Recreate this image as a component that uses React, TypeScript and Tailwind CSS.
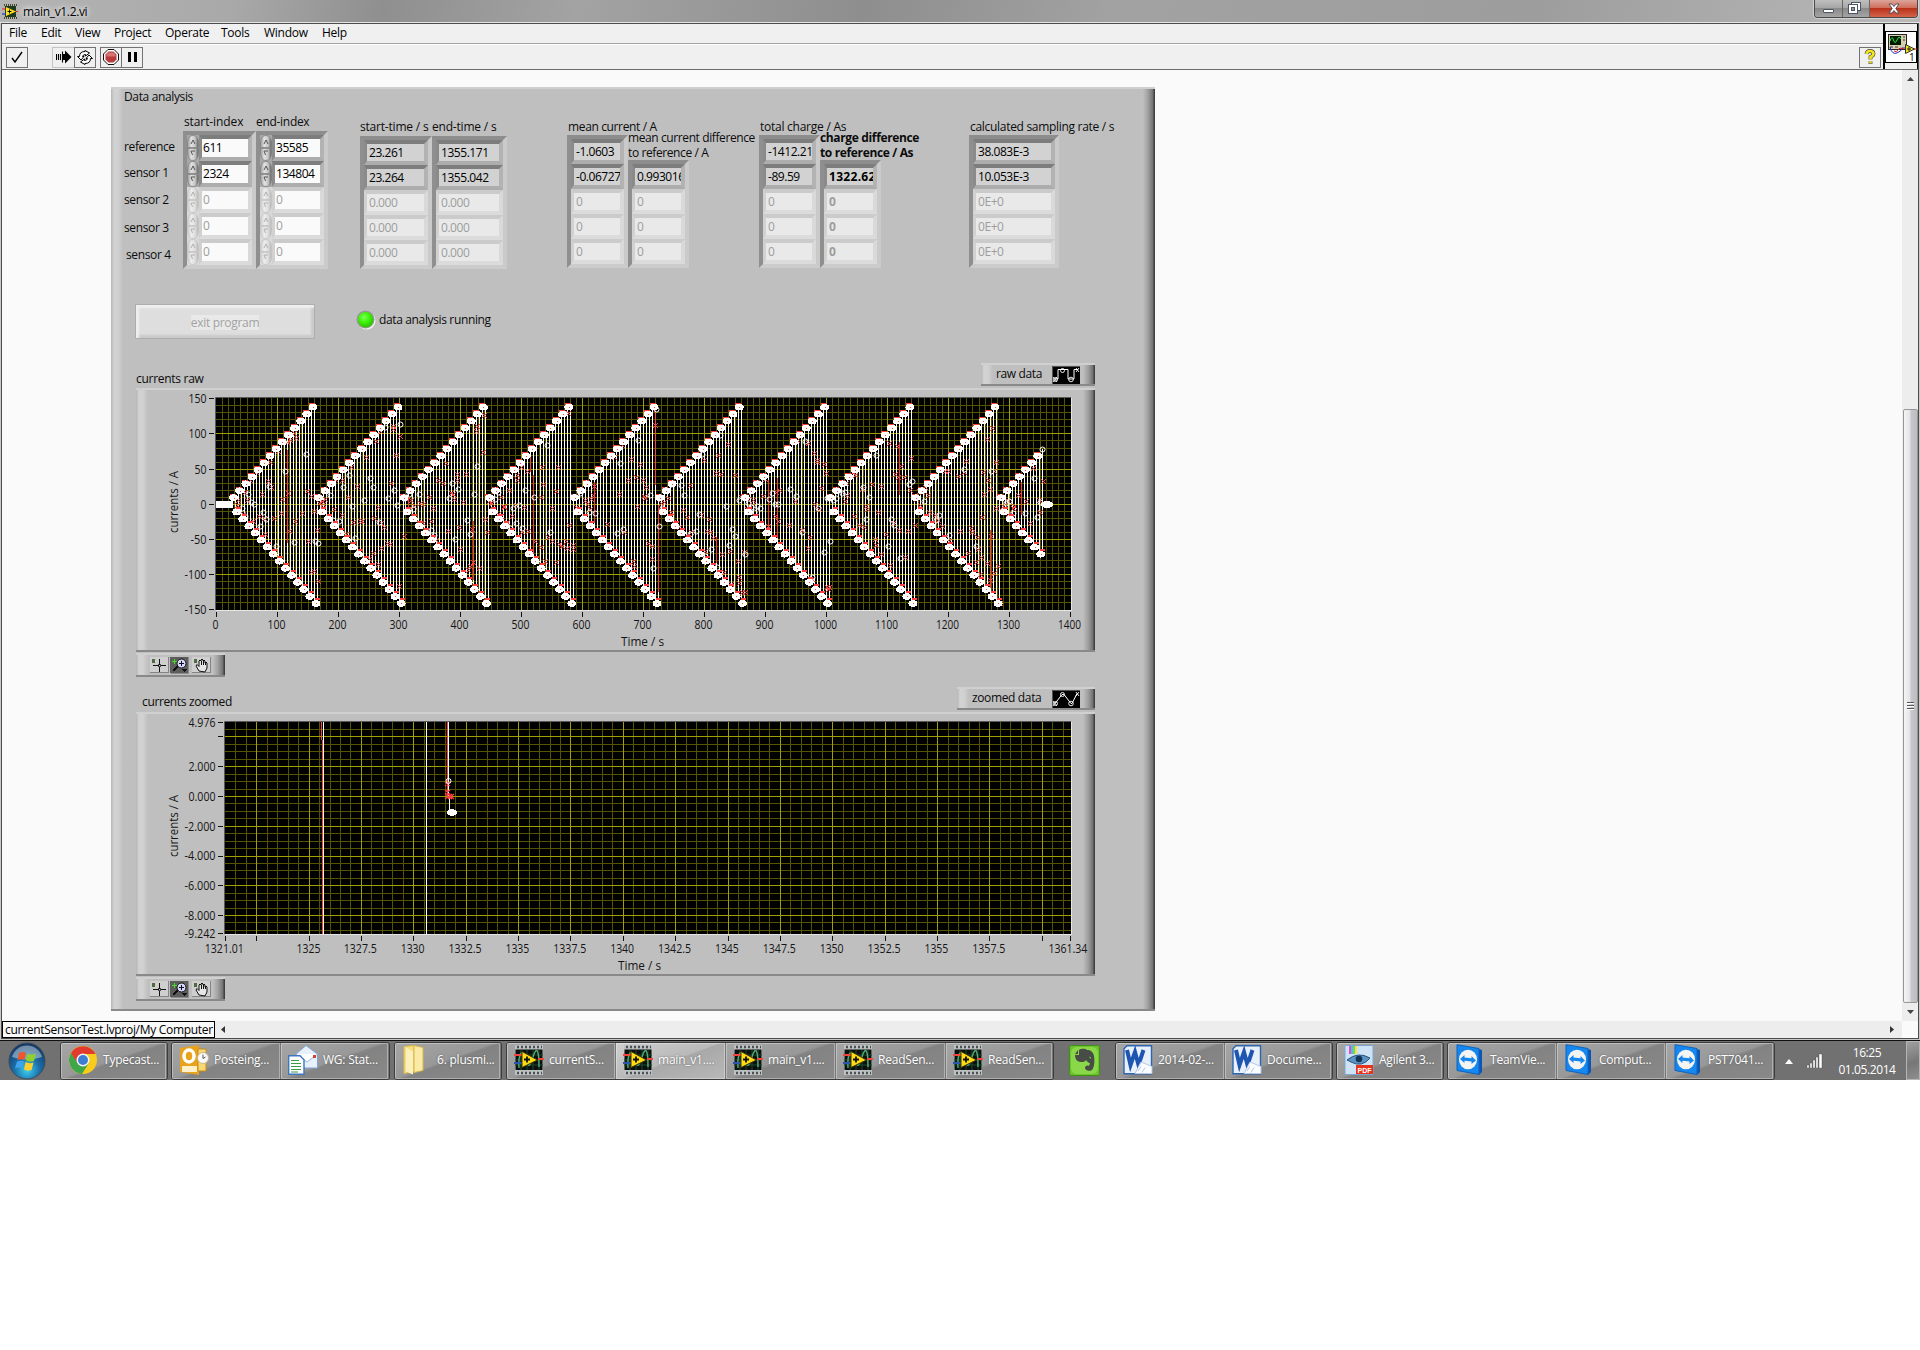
import React from "react";

/* ------------------------------------------------------------------ */
/* Data                                                                */
/* ------------------------------------------------------------------ */

type Row = { value: string; on: boolean };
const rows = (a: string[], zero: string, skip = 0): Row[] => [
  ...a.map((value) => ({ value, on: true })),
  ...Array.from({ length: 5 - skip - a.length }, () => ({ value: zero, on: false })),
];

/* Deterministic noise so that the scatter is stable between renders */
function makeRandom(seed: number) {
  let s = seed;
  return () => {
    s = (s * 1664525 + 1013904223) % 4294967296;
    return s / 4294967296;
  };
}

const RX = (t: number) => 80.5 + t * 0.61;
const RY = (a: number) => 116.3 - a * 0.7035;

type Pt = { x: number; y: number };
const raw = (() => {
  const random = makeRandom(2014);
  const pos: Pt[] = [];
  const neg: Pt[] = [];
  const lines: { x: number; y1: number; y2: number }[] = [];
  const crosses: Pt[] = [];
  const rings: Pt[] = [];
  for (let c = 0; c < 10; c++) {
    const t0 = 28 + c * 139.8;
    const last = c === 9 ? 7 : 14;
    for (let n = 1; n <= last; n++) {
      const p = { x: RX(t0 + (n - 1) * 10), y: RY(9.9 * n - 0.5) };
      const q = { x: RX(t0 + 5 + (n - 1) * 10), y: RY(-10 * n - 1) };
      pos.push(p);
      neg.push(q);
      const nextTop = n === last ? (c === 9 ? RY(78) : RY(9.4)) : RY(9.9 * (n + 1) - 0.5);
      [
        { x: Math.round(p.x + 1.3), y1: p.y, y2: q.y },
        { x: Math.round(q.x + 1.3), y1: nextTop, y2: q.y },
      ].forEach((l) => {
        lines.push(l);
        const span = l.y2 - l.y1;
        const count = Math.min(3, Math.floor(random() * 2.3 + span / 190));
        for (let i = 0; i < count; i++) crosses.push({ x: l.x + Math.round(random() * 2 - 1), y: Math.round(l.y1 + random() * span) });
        if (random() < 0.55) rings.push({ x: l.x + 1, y: Math.round(l.y1 + random() * span) });
      });
    }
  }
  return { pos, neg, lines, crosses, rings };
})();

/* Stretches where the sensor trace is drawn above the reference trace: x, top, bottom */
const redSegments = [
  [152, 62, 155], [336, 133, 192], [396, 87, 166], [274, 108, 124], [393, 69, 84], [457, 94, 135],
  [518, 22, 97], [522, 117, 204], [579, 149, 175], [631, 92, 142], [640, 90, 150], [763, 54, 107],
  [884, 94, 127], [854, 142, 200],
].map(([x, a, b]) => {
  const near = raw.lines.reduce((m, l) => (Math.abs(l.x - x) < Math.abs(m.x - x) ? l : m));
  return { x: near.x, a, b };
});

const AXIS = "fill-[#151515] font-['Open_Sans',sans-serif] text-[12px]";

/* ------------------------------------------------------------------ */
/* Front panel building blocks                                         */
/* ------------------------------------------------------------------ */

const bevel =
  "border-t-2 border-b-2 border-t-[#d0d0d0] border-b-[#898989] bg-[linear-gradient(90deg,#b6b6b6,#d2d2d2_3px,#d1d1d1_7px,#bfbfbf_12px,#bfbfbf_calc(100%-12px),#a0a0a0_calc(100%-7px),#707070_calc(100%-2px),#404040_calc(100%-1px),#404040)]";

function Spinner({ on }: { on: boolean }) {
  const id = on ? "knobOn" : "knobOff";
  const edge = on ? "#7c7c7c" : "#c2c2c2";
  return (
    <svg className="h-[26px] w-[12px] shrink-0" viewBox="0 0 12 26">
      <defs>
        <linearGradient id={id} x1="0" x2="1">
          <stop offset="0" stopColor={on ? "#9b9b9b" : "#cccccc"} />
          <stop offset="0.35" stopColor={on ? "#e2e2e2" : "#ededed"} />
          <stop offset="0.7" stopColor={on ? "#c4c4c4" : "#dddddd"} />
          <stop offset="1" stopColor={on ? "#5a5a5a" : "#b4b4b4"} />
        </linearGradient>
      </defs>
      <rect width="12" height="26" fill={on ? "#a8a8a8" : "#d9d9d9"} />
      <path d="M.5 12.500V8Q1 .5 6 .5T11.500 8v4.500z" fill={`url(#${id})`} stroke={edge} strokeWidth=".7" />
      <path d="M.5 13.500V18Q1 25.500 6 25.500T11.500 18v-4.500z" fill={`url(#${id})`} stroke={edge} strokeWidth=".7" />
      <path d="M4 9l2-4 2 4M8 16H4l1.500 4" fill="none" stroke={on ? "#555" : "#b0b0b0"} />
    </svg>
  );
}

function ArrayBox({ data, spin, bold, tall }: { data: Row[]; spin?: boolean; bold?: boolean; tall?: boolean }) {
  return (
    <div className="border-4 border-t-[#8d8d8d] border-r-[#cacaca] border-b-[#cccccc] border-l-[#8f8f8f]">
      {data.map((r, i) => (
        <div key={i} className={tall ? "flex h-[26px]" : "flex h-[25px]"}>
          {spin && <Spinner on={r.on} />}
          <div
            className={
              "flex min-w-0 flex-1 items-center overflow-hidden border-4 border-l-[3px] text-[12px] leading-[16px] whitespace-nowrap " +
              (r.on
                ? "border-t-[#7d7d7d] border-r-[#b3b3b3] border-b-[#adadad] border-l-[#8b8b8b] text-black "
                : "border-t-[#cbcbcb] border-r-[#d9d9d9] border-b-[#dbdbdb] border-l-[#d1d1d1] text-[#9d9d9d] ") +
              (spin ? "bg-[#fafafa] pl-px " : r.on ? "bg-[#d2d2d2] pl-[2px] " : "bg-[#e9e9e9] pl-[2px] ") +
              (bold ? "font-bold tracking-[0.3px]" : "tracking-[-0.45px]")
            }
          >
            {r.value}
          </div>
        </div>
      ))}
    </div>
  );
}

function Label({ children, className = "" }: { children: React.ReactNode; className?: string }) {
  return <div className={"text-[12px] leading-[15px] whitespace-nowrap text-[#0c0c0c] " + (className.includes("tracking") ? "" : "tracking-[-0.36px] ") + className}>{children}</div>;
}

function Palette() {
  return (
    <div className={"ml-[25px] flex h-[24px] w-[89px] pt-[2px] pl-[14px] " + bevel}>
      <svg className="h-[17px] w-[62px]" viewBox="0 0 62 17" shapeRendering="crispEdges">
        <rect x="0" y="0" width="19" height="16" fill="#cfcfcf" />
        <path d="M0 15.500H18.500V0" fill="none" stroke="#858585" />
        <path d="M3 8.500h13M9.500 2v13" stroke="#111" />
        <rect x="8.500" y="7.500" width="2" height="2" fill="#ccc" stroke="#111" strokeWidth=".7" />
        <rect x="2" y="2" width="3" height="4" fill="#4d6b3f" />
        <rect x="20" y="0" width="18" height="16" fill="#5d5d5d" />
        <path d="M38 0v16H21" fill="none" stroke="#8b8b8b" />
        <path d="M23 14l6-6" stroke="#111" strokeWidth="2" />
        <circle cx="31.500" cy="6.500" r="4.500" fill="#d6d6ff" stroke="#111" shapeRendering="auto" />
        <path d="M29 6.500h5M31.500 4v5" stroke="#111" />
        <path d="M31 12h6l-3 3z" fill="#111" />
        <path d="M22 4.500h5M24.500 2v5" stroke="#3fe01e" />
        <rect x="42" y="0" width="19" height="16" fill="#cfcfcf" />
        <path d="M42 15.500H60.500V0" fill="none" stroke="#858585" />
        <path
          d="M49 14l-3-5 1-1.500 2 2V4l1-1 1 1V3l1-1 1 1v1l1-1 1 1v2l1-1 1 1v5l-2 4z"
          fill="#e5e5e5"
          stroke="#111"
          shapeRendering="auto"
        />
        <path d="M51.500 4v4M53.500 4v4M55.500 5v3" stroke="#111" />
        <rect x="44" y="2" width="3" height="4" fill="#4d6b3f" />
      </svg>
    </div>
  );
}

function Legend({ text, zoomed }: { text: string; zoomed?: boolean }) {
  return (
    <div className={(zoomed ? "w-[138px] " : "w-[114px] ") + "mr-[60px] ml-auto flex h-[23px] items-center pl-[15px] " + bevel}>
      <Label className="mb-[2px] flex-1">{text}</Label>
      <svg className="mr-[15px] h-[18px] w-[28px]" viewBox="0 0 28 18">
        <rect width="28" height="18" fill="#000" />
        <path d="M.5 18V.5H28" fill="none" stroke="#555" />
        <path
          d={zoomed ? "M3 13.500l7-9h2l7 9h1l5-10" : "M3 13h3V3.500h10V13h6V3.500h4"}
          fill="none"
          stroke="#fff"
          strokeWidth="1"
        />
        <g fill="none" stroke="#fff" strokeWidth=".9">
          <path d="M1 11l4 5M5 11l-4 5M24 2l3 4M27 2l-3 4" />
          <circle cx="3.500" cy="13.500" r="2" />
          <circle cx="10.500" cy="4.500" r="2" />
          <circle cx="19" cy="13.500" r="2.300" />
        </g>
      </svg>
    </div>
  );
}

const range = (a: number, b: number) => Array.from({ length: b - a + 1 }, (_, i) => a + i);

function RawChart() {
  return (
    <svg className="block h-[260px] w-[959px]" viewBox="0 2 959 260">
      <path d="M79.500 222V9.500H935" fill="none" stroke="#5a5a5a" />
      <path d="M80 222.500H935.500V10" fill="none" stroke="#e6e6e6" />
      <rect x="80" y="10" width="855" height="212" fill="#000" />
      <g shapeRendering="crispEdges">
        {range(0, 140).map((i) => i % 10 !== 0 && <rect key={i} x={Math.round(RX(i * 10) - 0.5)} y="10" width="1" height="212" fill="#555500" />)}
        {range(-15, 15).map((i) => i % 5 !== 0 && <rect key={i} x="80" y={Math.round(RY(i * 10) - 0.5)} width="855" height="1" fill="#555500" />)}
        {range(1, 13).map((i) => <rect key={i} x={Math.round(RX(i * 100) - 0.5)} y="10" width="1" height="212" fill="#a0a000" />)}
        {range(-2, 2).map((i) => <rect key={i} x="80" y={Math.round(RY(i * 50) - 0.5)} width="855" height="1" fill="#a0a000" />)}
        {raw.lines.map((l, i) => <rect key={i} x={l.x} y={l.y1} width="1" height={l.y2 - l.y1} fill="#fff" />)}
        {redSegments.map((s, i) => <rect key={i} x={s.x} y={s.a} width="1" height={s.b - s.a} fill="#ff4040" />)}
        {raw.crosses.map((p, i) => (
          <path
            key={i}
            d={`M${p.x - 2} ${p.y - 2}h1v1h-1zM${p.x + 2} ${p.y - 2}h1v1h-1zM${p.x - 1} ${p.y - 1}h1v1h-1zM${p.x + 1} ${p.y - 1}h1v1h-1zM${p.x} ${p.y}h1v1h-1zM${p.x - 1} ${p.y + 1}h1v1h-1zM${p.x + 1} ${p.y + 1}h1v1h-1zM${p.x - 2} ${p.y + 2}h1v1h-1zM${p.x + 2} ${p.y + 2}h1v1h-1z`}
            fill="#ff4848"
          />
        ))}
      </g>
      {raw.rings.map((p, i) => (
        <circle key={i} cx={p.x + 0.5} cy={p.y + 0.5} r="2.500" fill="none" stroke="#fff" />
      ))}
      <g shapeRendering="crispEdges">
        {raw.pos.map((p, i) => (
          <g key={i}>
            <rect x={p.x - 4} y={p.y - 4} width="6" height="2" fill="#ff4040" />
            <ellipse cx={p.x} cy={p.y} rx="4.400" ry="3.300" fill="#fff" />
            <rect x={Math.round(p.x)} y={Math.round(p.y)} width="1" height="1" fill="#ff4040" />
          </g>
        ))}
        {raw.neg.map((p, i) => (
          <g key={i}>
            <rect x={p.x - 1} y={p.y - 5} width="5" height="2" fill="#ff4040" />
            <ellipse cx={p.x} cy={p.y} rx="4.400" ry="3.300" fill="#fff" />
            <rect x={Math.round(p.x)} y={Math.round(p.y)} width="1" height="1" fill="#ff4040" />
          </g>
        ))}
        <rect x="80" y="113" width="17" height="7" fill="#fff" />
        <ellipse cx="911" cy="116.500" rx="6" ry="3.500" fill="#fff" />
        {range(0, 14).map((i) => <rect key={i} x={Math.round(RX(i * 100) - 0.5)} y="224" width="1" height="5" fill="#111" />)}
        {range(-3, 3).map((i) => <rect key={i} x="73" y={Math.round(RY(i * 50) - 0.5)} width="5" height="1" fill="#111" />)}
      </g>
      <circle cx="906.500" cy="61.500" r="2.500" fill="none" stroke="#fff" />
      {range(0, 14).map((i) => {
        const w = i === 0 ? 6 : i < 10 ? 18 : 23;
        return (
          <text key={i} x={RX(i * 100) - 1} y="241" textAnchor="middle" textLength={w} lengthAdjust="spacingAndGlyphs" className={AXIS}>
            {i * 100}
          </text>
        );
      })}
      {range(-3, 3).map((i) => (
        <text key={i} x="70.500" y={RY(i * 50) + 4.500} textAnchor="end" textLength={[22, 22, 16, 6, 12, 18, 18][i + 3]} lengthAdjust="spacingAndGlyphs" className={AXIS}>
          {i * 50}
        </text>
      ))}
      <text x="485" y="258" textLength="43" lengthAdjust="spacingAndGlyphs" className={AXIS}>Time / s</text>
      <text transform="translate(42 145) rotate(-90)" textLength="62" lengthAdjust="spacingAndGlyphs" className={AXIS}>currents / A</text>
    </svg>
  );
}

const ZX = (t: number) => 89.5 + (t - 1321.01) * 20.95;
const ZY = (a: number) => 84.5 - a * 14.88;

function ZoomChart() {
  return (
    <svg className="block h-[260px] w-[959px]" viewBox="0 2 959 260">
      <path d="M88.500 222V9.500H935" fill="none" stroke="#5a5a5a" />
      <path d="M89 222.500H935.500V10" fill="none" stroke="#e6e6e6" />
      <rect x="89" y="10" width="846" height="212" fill="#000" />
      <g shapeRendering="crispEdges">
        {range(2643, 2722).map((i) => i % 5 !== 0 && <rect key={i} x={Math.round(ZX(i / 2) - 0.5)} y="10" width="1" height="212" fill="#555500" />)}
        {range(-18, 9).map((i) => i % 4 !== 0 && <rect key={i} x="89" y={Math.round(ZY(i / 2) - 0.5)} width="846" height="1" fill="#555500" />)}
        {range(529, 544).map((i) => (
          <g key={i}>
            <rect x={Math.round(ZX(i * 2.5) - 0.5)} y="10" width="1" height="212" fill="#a0a000" />
            <rect x={Math.round(ZX(i * 2.5) - 0.5)} y="224" width="1" height="5" fill="#111" />
          </g>
        ))}
        {range(-4, 2).map((i) => (
          <g key={i}>
            <rect x="89" y={Math.round(ZY(i * 2) - 0.5)} width="846" height="1" fill="#a0a000" />
            <rect x="82" y={Math.round(ZY(i * 2) - 0.5)} width="5" height="1" fill="#111" />
          </g>
        ))}
        <rect x="82" y="10" width="5" height="1" fill="#111" />
        <rect x="82" y="221" width="5" height="1" fill="#111" />
        <rect x="89" y="224" width="1" height="5" fill="#111" />
        <rect x="934" y="224" width="1" height="5" fill="#111" />
        <rect x="185" y="10" width="1" height="18" fill="#ff4040" />
        <rect x="186" y="28" width="1" height="194" fill="#ff4040" />
        <rect x="187" y="10" width="1" height="212" fill="#fff" />
        <rect x="290" y="10" width="1" height="212" fill="#fff" />
        <rect x="311" y="10" width="1" height="74" fill="#ff4040" />
        <rect x="312" y="10" width="1" height="74" fill="#fff" />
        <rect x="313" y="84" width="1" height="14" fill="#fff" />
        <ellipse cx="316" cy="100.500" rx="5" ry="3.200" fill="#fff" />
      </g>
      <path d="M309 70l5 4m0-4l-5 4M309 78l5 4m0-4l-5 4M309 82l7 5m0-5l-7 5M312 82l6 5m0-5l-6 5" stroke="#ff4040" strokeWidth="1.300" />
      <circle cx="312.500" cy="69" r="2.500" fill="none" stroke="#fff" />
      {[
        ["4.976", 4.976], ["2.000", 2], ["0.000", 0], ["-2.000", -2], ["-4.000", -4], ["-6.000", -6], ["-8.000", -8], ["-9.242", -9.22],
      ].map(([s, v]) => (
        <text key={s} x="79.500" y={ZY(v as number) + 4.400} textAnchor="end" textLength={(v as number) < 0 ? 31 : 27} lengthAdjust="spacingAndGlyphs" className={AXIS}>
          {s}
        </text>
      ))}
      {[1321.01, 1325, 1327.5, 1330, 1332.5, 1335, 1337.5, 1340, 1342.5, 1345, 1347.5, 1350, 1352.5, 1355, 1357.5, 1361.34].map((v) => (
        <text
          key={v}
          x={ZX(v) - (v === 1325 ? 0.5 : v === 1361.34 ? 2.5 : 1.2)}
          y="241"
          textAnchor="middle"
          textLength={String(v).length === 4 ? 24 : String(v).length === 6 ? 33 : 39}
          lengthAdjust="spacingAndGlyphs"
          className={AXIS}
        >
          {v}
        </text>
      ))}
      <text x="482" y="258" textLength="43" lengthAdjust="spacingAndGlyphs" className={AXIS}>Time / s</text>
      <text transform="translate(42 145) rotate(-90)" textLength="62" lengthAdjust="spacingAndGlyphs" className={AXIS}>currents / A</text>
    </svg>
  );
}

function FrontPanel() {
  const sensors = ["reference", "sensor 1", "sensor 2", "sensor 3", "sensor 4"];
  const gaps = ["mt-[35px]", "mt-[11px]", "mt-[12px]", "mt-[13px]", "mt-[12px] pl-[2px]"];
  return (
    <div className={"flex h-[924px] w-[1044px] flex-col " + bevel}>
      <div className="flex h-[215px] pl-[13px]">
        <div className="w-[59px]">
          <Label>Data analysis</Label>
          {sensors.map((s, i) => (
            <Label key={s} className={gaps[i]}>{s}</Label>
          ))}
        </div>
        <div className="w-[73px] pt-[25px]">
          <Label className="pb-[2px] pl-px tracking-[-0.1px]">start-index</Label>
          <ArrayBox spin tall data={rows(["611", "2324"], "0")} />
        </div>
        <div className="mr-[32px] w-[72px] pt-[25px]">
          <Label className="pb-[2px] tracking-[-0.3px]">end-index</Label>
          <ArrayBox spin tall data={rows(["35585", "134804"], "0")} />
        </div>
        <div className="w-[72px] pt-[30px]">
          <Label className="pb-[2px] tracking-[-0.2px]">start-time / s</Label>
          <ArrayBox data={rows(["23.261", "23.264"], "0.000")} />
        </div>
        <div className="mr-[60px] w-[75px] pt-[30px]">
          <Label className="pb-[2px] tracking-[-0.2px]">end-time / s</Label>
          <ArrayBox data={rows(["1355.171", "1355.042"], "0.000")} />
        </div>
        <div className="w-[61px] pt-[30px]">
          <Label className="pb-px pl-px">mean current / A</Label>
          <ArrayBox data={rows(["-1.0603", "-0.06727"], "0")} />
        </div>
        <div className="mr-[70px] w-[61px] pt-[41px]">
          <Label className="tracking-[-0.4px]">mean current difference<br />to reference / A</Label>
          <ArrayBox data={rows(["0.993016"], "0", 1)} />
        </div>
        <div className="w-[61px] pt-[30px]">
          <Label className="pb-px pl-px tracking-[-0.25px]">total charge / As</Label>
          <ArrayBox data={rows(["-1412.21", "-89.59"], "0")} />
        </div>
        <div className="mr-[88px] w-[61px] pt-[41px]">
          <Label className="font-bold tracking-[-0.35px]">charge difference<br />to reference / As</Label>
          <ArrayBox bold data={rows(["1322.62"], "0", 1)} />
        </div>
        <div className="w-[90px] pt-[30px]">
          <Label className="pb-px pl-px tracking-[-0.3px]">calculated sampling rate / s</Label>
          <ArrayBox data={rows(["38.083E-3", "10.053E-3"], "0E+0")} />
        </div>
      </div>

      <div className="flex h-[36px] pl-[24px]">
        <div className="flex h-[35px] w-[180px] items-center justify-center border border-[#adadad] bg-[#dedede] shadow-[inset_3px_3px_2px_#efefef,inset_-3px_-3px_2px_#cacaca]">
          <Label className="mt-[2px] bg-[#e9e9e9] tracking-[-0.3px] text-[#a2a2a2]">exit program</Label>
        </div>
        <svg className="mt-[6px] ml-[41px] h-[20px] w-[20px]" viewBox="0 0 20 20">
          <defs>
            <radialGradient id="led" cx=".4" cy=".35" r=".6">
              <stop offset="0" stopColor="#7dff5a" />
              <stop offset=".5" stopColor="#42f70c" />
              <stop offset="1" stopColor="#2fc904" />
            </radialGradient>
          </defs>
          <circle cx="10.700" cy="10.700" r="8.800" fill="#f2f2f2" />
          <circle cx="9.500" cy="9.500" r="9" fill="#979797" />
          <circle cx="9.700" cy="9.700" r="7.700" fill="url(#led)" />
        </svg>
        <Label className="mt-[8px] ml-[3px]">data analysis running</Label>
      </div>

      <div className="flex h-[48px] items-end">
        <Label className="mb-[2px] ml-[25px] tracking-[-0.28px]">currents raw</Label>
        <div className="mb-[2px] flex flex-1">
          <Legend text="raw data" />
        </div>
      </div>
      <div className={"ml-[25px] h-[264px] w-[959px] " + bevel}>
        <RawChart />
      </div>
      <div className="mt-px">
        <Palette />
      </div>

      <div className="flex h-[35px] items-end">
        <Label className="mb-[3px] ml-[31px]">currents zoomed</Label>
        <div className="mb-[2px] flex flex-1">
          <Legend text="zoomed data" zoomed />
        </div>
      </div>
      <div className={"ml-[25px] h-[264px] w-[959px] " + bevel}>
        <ZoomChart />
      </div>
      <div className="mt-px">
        <Palette />
      </div>
    </div>
  );
}

/* ------------------------------------------------------------------ */
/* Icons                                                               */
/* ------------------------------------------------------------------ */

function LabViewIcon() {
  return (
    <svg className="h-[30px] w-[30px]" viewBox="0 0 30 30">
      <rect x="1" y="0" width="28" height="30" fill="#bcc2c3" />
      <path d="M3 2h25M3 28h25" stroke="#4c5050" strokeWidth="2.400" strokeDasharray="2 2" />
      <rect x="1.500" y="4.500" width="27" height="20.500" fill="#0b0f0d" />
      <path d="M7 5v20M13 5v20M19 5v20M25 5v20M1 10h28M1 15h28M1 20h28" stroke="#1d4a33" />
      <path d="M5 23C4 9 8 3 11 12s4 13 8 0 6-5 6 10" fill="none" stroke="#4fae78" strokeWidth="1.400" />
      <path d="M0 10h8M24 14h6" stroke="#f0453a" strokeWidth="1.800" />
      <path d="M0 18h8" stroke="#2d55b0" strokeWidth="1.800" />
      <path d="M8 6.500l15.500 8.500L8 22.500z" fill="#ffdc12" stroke="#3c3505" />
      <path d="M10 14.500h6M13 11.500v6" stroke="#111" strokeWidth="1.800" />
    </svg>
  );
}

function ChromeIcon() {
  return (
    <svg className="h-[30px] w-[30px]" viewBox="0 0 30 30">
      <circle cx="15" cy="15" r="14" fill="#f8cc1c" />
      <path d="M2.900 8A14 14 0 0 1 27.500 9H15l-6.500 9z" fill="#e23b2e" />
      <path d="M2.900 8A14 14 0 0 0 14 29l6.500-10.500-11-.5z" fill="#3fa649" />
      <circle cx="15" cy="15" r="6.500" fill="#f5f5f5" />
      <circle cx="15" cy="15" r="5" fill="#3d7ed2" />
    </svg>
  );
}

function OutlookIcon() {
  return (
    <svg className="h-[30px] w-[30px]" viewBox="0 0 30 30">
      <path d="M1 3l19-3v30L1 27z" fill="#e9a21b" />
      <path d="M19 4h8v22h-8z" fill="#f7d776" stroke="#c98b12" />
      <rect x="3" y="21" width="15" height="6" fill="#fff2cb" />
      <ellipse cx="10" cy="11" rx="5" ry="6" fill="none" stroke="#fff" strokeWidth="3.500" />
      <circle cx="24" cy="13" r="5.500" fill="#fafafa" stroke="#c4b78f" />
      <path d="M24 9.500V13.500l2.500-1.500" fill="none" stroke="#555" />
    </svg>
  );
}

function MailIcon() {
  return (
    <svg className="h-[30px] w-[30px]" viewBox="0 0 30 30">
      <path d="M8 9L18 .5 29.500 9v14H8z" fill="#e8f0fb" stroke="#7ea3d4" />
      <path d="M8 9l11 8 10.500-8" fill="#fff" stroke="#9bb8df" />
      <rect x="25" y="10" width="3" height="3" fill="#d9412e" />
      <path d="M.7 10.700H12l4 4v14.500H.7z" fill="#fff" stroke="#3e76c1" strokeWidth="1.400" />
      <path d="M3 15.500h8M3 18.500h10M3 21.500h10M3 24.500h10M3 27h7" stroke="#3a9c42" strokeWidth="1.200" />
    </svg>
  );
}

function FolderIcon() {
  return (
    <svg className="h-[30px] w-[30px]" viewBox="0 0 30 30">
      <path d="M2 1.500l10-1v26l-10 2z" fill="#f6df83" stroke="#d9b84b" />
      <path d="M12 .5l9 2v23l-9 2z" fill="#f9eaa5" stroke="#d9b84b" />
      <path d="M4 2.500l7 4v23l-7-3z" fill="#fbf0bb" />
    </svg>
  );
}

function WordIcon() {
  return (
    <svg className="h-[30px] w-[30px]" viewBox="0 0 30 30">
      <path d="M4 .7h24.500v28H1V3.700z" fill="#e8f0fa" stroke="#2e65b0" strokeWidth="1.400" />
      <path d="M4 5l3.500 15L12 7l3.500 13L20.500 5" fill="none" stroke="#1d55b0" strokeWidth="4" />
      <path d="M18 17l11 4.500v7H12z" fill="#fafcff" stroke="#b5c8e4" />
      <path d="M15 26l3-4.500M19 27.500l3-5" stroke="#b5c8e4" />
    </svg>
  );
}

function PdfIcon() {
  return (
    <svg className="h-[30px] w-[30px]" viewBox="0 0 30 30">
      <rect x="1" y=".5" width="28" height="29" rx="1" fill="#cfe3f6" stroke="#7ea6cf" />
      <path d="M5 1h2v8H5z" fill="#e34bd0" />
      <path d="M7 1h2v8H7z" fill="#4dbcf0" />
      <path d="M9 1h2v8H9z" fill="#6fdc4a" />
      <path d="M11 1h2v8h-2z" fill="#f5e14a" />
      <path d="M3 15q11-9 23-2-8 10-19 4z" fill="#5c93c6" stroke="#28537f" />
      <circle cx="15" cy="14" r="3.300" fill="#123353" />
      <rect x="12" y="20" width="17" height="9" fill="#e8321b" />
      <text x="13.500" y="27.500" textLength="14" lengthAdjust="spacingAndGlyphs" className="fill-white font-['Liberation_Sans',sans-serif] text-[8px] font-bold">PDF</text>
    </svg>
  );
}

function TeamViewerIcon() {
  return (
    <svg className="h-[31px] w-[30px]" viewBox="0 0 30 31">
      <path d="M24 5l3 1v22l-3 3z" fill="#0b56b4" />
      <path d="M2 .7l22 3.800v26L2 26.500z" fill="#1687ee" stroke="#0e63bd" />
      <ellipse cx="13" cy="15.500" rx="9" ry="9.800" fill="#f4f4f2" />
      <path d="M5 15l4.500-4v2.500l7 .8V12l4.500 4.500-4.500 3.500v-2.500l-7-.8V19z" fill="#1687ee" />
    </svg>
  );
}

function EvernoteIcon() {
  return (
    <svg className="h-[31px] w-[31px]" viewBox="0 0 31 31">
      <rect x=".5" y=".5" width="30" height="30" rx="2" fill="#6cc32c" stroke="#3f9312" />
      <rect x="2" y="2" width="27" height="27" rx="6" fill="#8bd74a" />
      <path
        d="M6 10h4V5c3-2 7-1 8 0 3 0 6 1 7 6 1 6 0 12-2 14-3 2-7 0-7-2s2-3 4-2l1-3c-2 0-3-2-4-3-1 2-3 2-5 2-4 0-6-3-6-7zM6 9l3-4v4z"
        fill="#474d46"
      />
      <path d="M20 12q2-1 2 2z" fill="#8bd74a" />
    </svg>
  );
}

/* ------------------------------------------------------------------ */
/* Taskbar                                                             */
/* ------------------------------------------------------------------ */

type Task = { icon: React.ReactNode; text: string; width: string; active?: boolean };

function TaskGroup({ items, className = "" }: { items: Task[]; className?: string }) {
  return (
    <div className={"flex h-[38px] overflow-hidden rounded-[3px] border border-[#3c3c3c] " + className}>
      {items.map((t, i) => (
        <div
          key={i}
          className={
            "flex shrink-0 items-center gap-[5px] border-r border-r-[#777] pb-[2px] pl-[7px] shadow-[inset_0_0_0_1px_#ffffff55] " +
            t.width +
            " " +
            (t.active
              ? "bg-[linear-gradient(160deg,#d0d0d0,#b9b9b9_50%,#a9a9a9_51%,#b8b8b8)]"
              : "bg-[linear-gradient(160deg,#a6a6a6,#989898_48%,#838383_52%,#898989)]")
          }
        >
          {t.icon}
          <span className="text-[12px] tracking-[-0.22px] whitespace-nowrap text-white [text-shadow:0_0_2px_#555]">{t.text}</span>
        </div>
      ))}
    </div>
  );
}

function Taskbar() {
  return (
    <div className="flex h-[40px] items-center border-t border-[#111] bg-[#717171]">
      <svg className="ml-[8px] h-[38px] w-[38px]" viewBox="0 0 38 38">
        <defs>
          <radialGradient id="orb" cx=".5" cy=".75" r=".7">
            <stop offset="0" stopColor="#3fd0f0" />
            <stop offset=".5" stopColor="#1c6ea8" />
            <stop offset="1" stopColor="#153a66" />
          </radialGradient>
        </defs>
        <circle cx="19" cy="19" r="18" fill="url(#orb)" stroke="#3a4c5e" />
        <path d="M4 15a15.500 15.500 0 0 1 30 0q-15 5-30 0z" fill="#ffffff" opacity=".4" />
        <path d="M11 11q4-2 7 0l-1.500 7q-3-1.500-7 0z" fill="#f0562a" />
        <path d="M19.500 11.500q4 2 8.500 0l-2 7.500q-4 1.500-8-.5z" fill="#8fd02c" />
        <path d="M9 19.500q4-1.500 7 0l-1.500 7q-3-2-7.500 0z" fill="#3fa4ee" />
        <path d="M17.500 20q4 2 8 .5l-2 7.500q-4 1.500-7.500-.5z" fill="#fdd02c" />
      </svg>
      <TaskGroup className="ml-[14px] w-[108px]" items={[{ icon: <ChromeIcon />, text: "Typecast...", width: "w-[106px]" }]} />
      <TaskGroup
        className="ml-[3px] w-[219px]"
        items={[
          { icon: <OutlookIcon />, text: "Posteing...", width: "w-[109px]" },
          { icon: <MailIcon />, text: "WG: Stat...", width: "w-[108px]" },
        ]}
      />
      <TaskGroup className="ml-[4px] w-[108px]" items={[{ icon: <FolderIcon />, text: "6. plusmi...", width: "w-[106px]" }]} />
      <TaskGroup
        className="ml-[4px] w-[548px]"
        items={[
          { icon: <LabViewIcon />, text: "currentS...", width: "w-[109px]" },
          { icon: <LabViewIcon />, text: "main_v1....", width: "w-[110px]", active: true },
          { icon: <LabViewIcon />, text: "main_v1....", width: "w-[110px]" },
          { icon: <LabViewIcon />, text: "ReadSen...", width: "w-[110px]" },
          { icon: <LabViewIcon />, text: "ReadSen...", width: "w-[107px]" },
        ]}
      />
      <div className="mx-[15px]">
        <EvernoteIcon />
      </div>
      <TaskGroup
        className="w-[218px]"
        items={[
          { icon: <WordIcon />, text: "2014-02-...", width: "w-[109px]" },
          { icon: <WordIcon />, text: "Docume...", width: "w-[107px]" },
        ]}
      />
      <TaskGroup className="ml-[3px] w-[108px]" items={[{ icon: <PdfIcon />, text: "Agilent 3...", width: "w-[106px]" }]} />
      <TaskGroup
        className="ml-[3px] w-[328px]"
        items={[
          { icon: <TeamViewerIcon />, text: "TeamVie...", width: "w-[109px]" },
          { icon: <TeamViewerIcon />, text: "Comput...", width: "w-[109px]" },
          { icon: <TeamViewerIcon />, text: "PST7041...", width: "w-[108px]" },
        ]}
      />
      <div className="flex flex-1 items-center">
        <svg className="ml-[10px] h-[6px] w-[8px]" viewBox="0 0 8 6">
          <path d="M0 6l4-5 4 5z" fill="#fff" />
        </svg>
        <svg className="ml-[13px] h-[15px] w-[17px]" viewBox="0 0 17 15">
          <path d="M1 12h2v3H1zM4 10h2v5H4zM7 7h2v8H7zM10 4h2v11h-2zM13 1h3v14h-3z" fill="#fff" stroke="#444" strokeWidth=".4" />
        </svg>
        <div className="flex-1 pl-[5px] text-center text-[12px] leading-[17px] tracking-[-0.4px] text-white">
          16:25
          <br />
          01.05.2014
        </div>
      </div>
      <div className="h-full w-[14px] border border-[#b5b5b5] bg-[linear-gradient(160deg,#a0a0a0,#777_55%,#8e8e8e)]" />
    </div>
  );
}

/* ------------------------------------------------------------------ */
/* Window                                                              */
/* ------------------------------------------------------------------ */

function TitleBar() {
  return (
    <div className="flex h-[23px] justify-between border-b border-b-[#e4e4e4] bg-[linear-gradient(100deg,#b4b4b4,#a9a9a9_12%,#8f8f8f_20%,#a3a3a3_30%,#8e8e8e_45%,#a2a2a2_58%,#9d9d9d_80%,#b9b9b9)]">
      <div className="flex h-[23px] items-center">
        <svg className="ml-[2px] h-[15px] w-[16px]" viewBox="0 0 16 15">
          <rect x="2" y="0" width="13" height="15" fill="#b8b8a0" />
          <path d="M2 1h13M2 14h13" stroke="#444" strokeWidth="2" strokeDasharray="1 1" />
          <rect x="3" y="2" width="11" height="11" fill="#1d3a20" />
          <path d="M0 5h5M13 7.500h3" stroke="#e02020" strokeWidth="1.200" />
          <path d="M0 10h5" stroke="#2038d0" strokeWidth="1.200" />
          <path d="M4 3l10 4.500L4 12z" fill="#ffe21a" />
          <path d="M5.500 7.500h4M7.500 5.500v4" stroke="#111" />
        </svg>
        <span className="ml-[5px] text-[12px] tracking-[-0.35px] text-black [text-shadow:0_0_5px_#fff,0_0_8px_#fff]">main_v1.2.vi</span>
      </div>
      <div className="mr-[2px] flex h-[18px] overflow-hidden rounded-b-[4px] border border-t-0 border-[#4a4a4a] shadow-[0_0_1px_1px_#d5d5d5]">
        <div className="flex w-[28px] items-center justify-center border-r border-[#666] bg-[linear-gradient(#bfbfbf,#a5a5a5_48%,#8a8a8a_50%,#a5a5a5)]">
          <div className="mt-[4px] h-[4px] w-[11px] rounded-[1px] border border-[#4b5566] bg-white" />
        </div>
        <div className="flex w-[27px] items-center justify-center border-r border-[#666] bg-[linear-gradient(#bfbfbf,#a5a5a5_48%,#8a8a8a_50%,#a5a5a5)]">
          <svg className="mr-[3px] mb-[2px] h-[12px] w-[13px]" viewBox="0 0 13 12">
            <rect x="3.500" y=".5" width="9" height="8" fill="#fff" stroke="#4b5566" />
            <rect x=".5" y="2.500" width="9" height="9" fill="#fff" stroke="#4b5566" />
            <rect x="3.500" y="5.500" width="3" height="3" fill="#999" stroke="#4b5566" />
          </svg>
        </div>
        <div className="flex w-[47px] items-center justify-center bg-[linear-gradient(#dca59a,#cf6c58_48%,#bb321b_50%,#d2644a)]">
          <svg className="mb-px h-[11px] w-[12px]" viewBox="0 0 12 11">
            <path d="M1 1h3l2 2.500L8 1h3L7.800 5.500 11 10H8L6 7.500 4 10H1l3.200-4.500z" fill="#fff" stroke="#4b4450" strokeWidth=".9" />
          </svg>
        </div>
      </div>
    </div>
  );
}

function Chrome() {
  const menu: [string, string][] = [
    ["File", "w-[32px]"], ["Edit", "w-[34px]"], ["View", "w-[39px]"], ["Project", "w-[51px]"], ["Operate", "w-[56px]"], ["Tools", "w-[43px]"], ["Window", "w-[58px]"], ["Help", "w-[40px]"],
  ];
  return (
    <div className="flex h-[47px] border-t border-b border-t-[#4d4d4d] border-b-[#6c6c6c] bg-[#f0f0f0]">
      <div className="flex flex-1 flex-col">
        <div className="flex h-[20px] items-center border-b border-[#a3a3a3] pb-px pl-[7px]">
          {menu.map(([m, w]) => (
            <span key={m} className={"text-[12px] leading-[16px] tracking-[-0.25px] text-black " + w}>{m}</span>
          ))}
        </div>
        <div className="flex flex-1 items-center border-t border-t-white pl-[4px]">
          <div className="flex h-[21px] w-[22px] items-center justify-center border border-[#737373]">
            <svg className="h-[12px] w-[12px]" viewBox="0 0 12 12">
              <path d="M1 7l3 4 7-10" fill="none" stroke="#000" strokeWidth="1.400" />
            </svg>
          </div>
          <div className="ml-[24px] flex h-[21px] w-[22px] items-center justify-center border border-r-0 border-[#c4c4c4]">
            <svg className="h-[14px] w-[16px]" viewBox="0 0 16 14">
              <path d="M.5 4v6M2.500 4v6M4.500 4v6M6.500 1.500v11" stroke="#000" strokeWidth="1.100" />
              <path d="M7 4h2V.5L15.500 7 9 13.500V10H7z" fill="#000" />
            </svg>
          </div>
          <div className="flex h-[21px] w-[22px] items-center justify-center border border-[#737373]">
            <svg className="h-[15px] w-[16px]" viewBox="0 0 16 15">
              <path
                d="M2.500 6.500Q2.500 1.500 8 1.500V.5l4.500 2.500L8.500 6V4.500Q6 4.500 5.500 6.500H7L4 10 .5 6.500zM13.500 8.500Q13.500 13.500 8 13.500v1L3.500 12l4-3v1.500q2.500 0 3-2H9L12 5l3.500 3.500z"
                fill="#fff"
                stroke="#000"
              />
            </svg>
          </div>
          <div className="ml-[4px] flex h-[21px] w-[22px] items-center justify-center border border-[#737373]">
            <svg className="h-[16px] w-[16px]" viewBox="0 0 16 16">
              <path d="M5 .5h6L15.500 5v6L11 15.500H5L.5 11V5z" fill="#fff" stroke="#111" />
              <path d="M5.500 2.500h5l3 3v5l-3 3h-5l-3-3v-5z" fill="#b93a3a" />
              <path d="M5.500 3.500h5l2 2v2h-9v-2z" fill="#d67373" />
            </svg>
          </div>
          <div className="flex h-[21px] w-[21px] items-center justify-center gap-[3px] border border-l-0 border-[#737373]">
            <div className="h-[10px] w-[3px] bg-black" />
            <div className="h-[10px] w-[3px] bg-black" />
          </div>
          <div className="mr-[2px] ml-auto flex h-[21px] w-[22px] items-center justify-center border border-[#737373]">
            <svg className="h-[16px] w-[12px]" viewBox="0 0 12 16">
              <path d="M2.500 5Q3 2 6 2T9.500 4.500Q9.500 6.500 6.500 8v2.500M6.500 12.500v2.500" fill="none" stroke="#444" strokeWidth="3.800" />
              <path d="M2.500 5Q3 2 6 2T9.500 4.500Q9.500 6.500 6.500 8v2.500M6.500 12.500v2" fill="none" stroke="#f5e61c" strokeWidth="2.600" />
            </svg>
          </div>
        </div>
      </div>
      <div className="flex w-[35px] items-center justify-center border-2 border-y-0 border-r border-black">
        <svg className="h-[32px] w-[32px]" viewBox="0 0 32 32">
          <rect x=".5" y=".5" width="31" height="31" fill="#fff" stroke="#000" />
          <rect x="3.500" y="3.500" width="18" height="15" fill="#d5cfae" stroke="#222" />
          <rect x="5" y="5" width="11" height="9" fill="#001a00" />
          <path d="M5 10q2-6 3.500-1T12 9t4-1" fill="none" stroke="#2ee63a" />
          <path d="M18 6h2M18 9h2M5 16h3M10 16h3" stroke="#333" />
          <path d="M5 16q2 8 7 6t5-5h4" fill="none" stroke="#2030c0" />
          <path d="M9 20q3 2 4-1t6-1M28 18h4" fill="none" stroke="#e02020" />
          <path d="M20.500 13.500l9 4.500-9 4.500z" fill="#f3e51c" stroke="#333" />
          <path d="M22 18h4M24 16v4" stroke="#222" />
          <text x="24" y="30" className="fill-black font-['Open_Sans',sans-serif] text-[10px]">1</text>
        </svg>
      </div>
    </div>
  );
}

export default function App() {
  return (
    <div className="flex h-[1350px] w-[1920px] flex-col overflow-hidden bg-white font-['Open_Sans','Noto_Sans',sans-serif]">
      <TitleBar />
      <div className="flex h-[1017px] flex-col border-x border-b border-[#c9c9c9]">
        <div className="flex flex-1 flex-col border-x border-b border-[#4d4d4d] bg-[#fafafa]">
          <Chrome />
          <div className="flex h-[951px]">
            <div className="flex-1 pt-[17px] pl-[109px]">
              <FrontPanel />
            </div>
            <div className="flex w-[16px] flex-col items-center bg-[#ededed]">
              <svg className="mt-[7px] h-[4px] w-[7px]" viewBox="0 0 7 4"><path d="M0 4l3.500-4L7 4z" fill="#444" /></svg>
              <div className="mt-[328px] flex h-[594px] w-[15px] flex-col items-center justify-center gap-px rounded-[2px] border border-[#979797] bg-[linear-gradient(90deg,#f5f5f5,#e4e4e6_45%,#c6c6cb_55%,#bdbdc4)]">
                <div className="h-[2px] w-[7px] border-b border-white bg-[#555]" />
                <div className="h-[2px] w-[7px] border-b border-white bg-[#555]" />
                <div className="h-[2px] w-[7px] border-b border-white bg-[#555]" />
              </div>
              <svg className="mt-[7px] h-[4px] w-[7px]" viewBox="0 0 7 4"><path d="M0 0l3.500 4L7 0z" fill="#444" /></svg>
            </div>
          </div>
          <div className="flex h-[17px] items-center bg-[#ededed]">
            <div className="flex h-[17px] w-[213px] shrink-0 items-center border border-black bg-[#fafafa] pl-[2px] text-[12px] leading-[15px] tracking-[-0.3px] whitespace-nowrap text-black">
              currentSensorTest.lvproj/My Computer
            </div>
            <svg className="ml-[6px] h-[7px] w-[4px]" viewBox="0 0 4 7"><path d="M4 0L0 3.500 4 7z" fill="#333" /></svg>
            <div className="flex-1" />
            <svg className="mr-[8px] h-[7px] w-[4px]" viewBox="0 0 4 7"><path d="M0 0l4 3.500L0 7z" fill="#333" /></svg>
            <div className="h-[17px] w-[16px] bg-[#fafafa]" />
          </div>
        </div>
      </div>
      <Taskbar />
    </div>
  );
}
